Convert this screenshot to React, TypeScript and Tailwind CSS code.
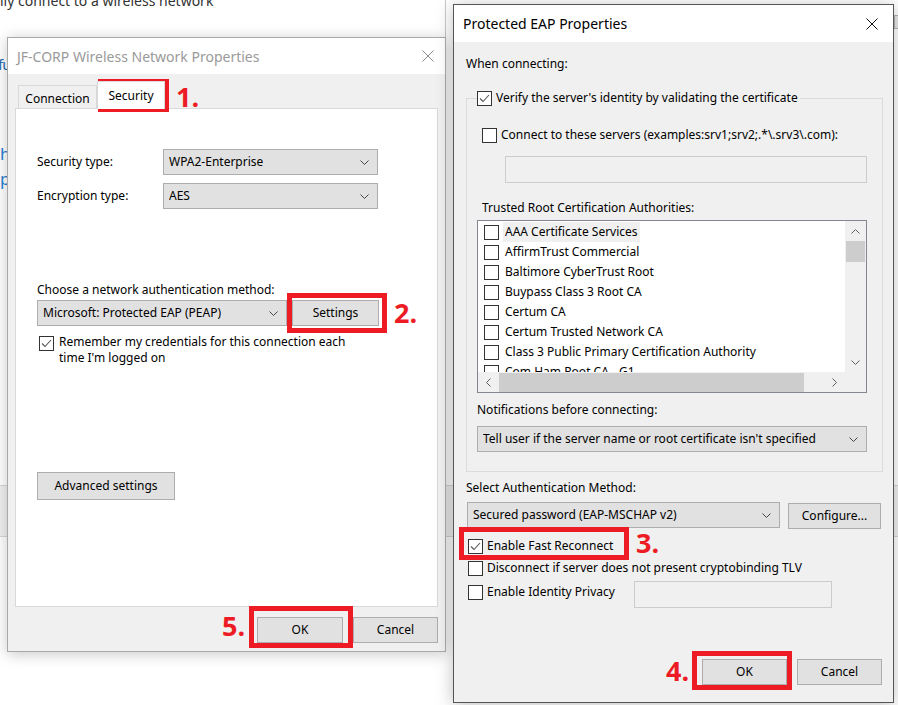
import type { ReactNode } from 'react'

function Chevron({ dir = 'down', color = '#444' }: { dir?: 'down' | 'up' | 'left' | 'right'; color?: string }) {
  const pts = {
    down: '0.5,0.5 4.5,4.5 8.5,0.5',
    up: '0.5,4.5 4.5,0.5 8.5,4.5',
    left: '4.5,0.5 0.5,4.5 4.5,8.5',
    right: '0.5,0.5 4.5,4.5 0.5,8.5',
  }[dir]
  const vertical = dir === 'down' || dir === 'up'
  return (
    <svg width={vertical ? 9 : 5} height={vertical ? 5 : 9} viewBox={vertical ? '0 0 9 5' : '0 0 5 9'} className="shrink-0">
      <polyline points={pts} fill="none" stroke={color} strokeWidth="1" />
    </svg>
  )
}

function CloseX({ color }: { color: string }) {
  return (
    <svg width="12" height="12" viewBox="0 0 12 12">
      <path d="M0.5 0.5 L11.5 11.5 M11.5 0.5 L0.5 11.5" stroke={color} strokeWidth="1" />
    </svg>
  )
}

function Check({ on = false }: { on?: boolean }) {
  return (
    <span className="flex h-[15px] w-[15px] shrink-0 items-center justify-center border border-[#333] bg-white">
      {on && (
        <svg width="11" height="9" viewBox="0 0 11 9">
          <path d="M1 4.5 L4 7.5 L10 1" fill="none" stroke="#555" strokeWidth="1.1" />
        </svg>
      )}
    </span>
  )
}

function Select({ value, className = '' }: { value: string; className?: string }) {
  return (
    <div className={`flex h-[26px] items-center justify-between border border-[#adadad] bg-[#e1e1e1] pl-[5px] pr-[8px] ${className}`}>
      <span className="truncate">{value}</span>
      <Chevron />
    </div>
  )
}

function Btn({ children, className = '' }: { children: ReactNode; className?: string }) {
  return (
    <button type="button" className={`flex h-[26px] items-center justify-center border border-[#adadad] bg-[#e1e1e1] ${className}`}>
      {children}
    </button>
  )
}

function RedBox({ className }: { className: string }) {
  return <div className={`pointer-events-none absolute border-[5px] border-[#ed1c24] ${className}`} />
}

function Step({ n, className }: { n: string; className: string }) {
  return (
    <span className={`absolute font-['Open_Sans',sans-serif] text-[27px] leading-none font-bold text-[#ed1c24] ${className}`}>
      {n}
    </span>
  )
}

const certs = [
  'AAA Certificate Services',
  'AffirmTrust Commercial',
  'Baltimore CyberTrust Root',
  'Buypass Class 3 Root CA',
  'Certum CA',
  'Certum Trusted Network CA',
  'Class 3 Public Primary Certification Authority',
  'Com Ham Root CA - G1',
]

function NetworkProperties() {
  return (
    <div className="absolute left-[7px] top-[37px] flex h-[615px] w-[439px] flex-col border border-[#a9a9a9] bg-[#f0f0f0] shadow-[0_2px_14px_rgba(0,0,0,0.22)]">
      <div className="flex h-[36px] items-center justify-between bg-white pr-[11px] pl-[9px]">
        <span className="text-[14px] text-[#9a9a9a]">JF-CORP Wireless Network Properties</span>
        <CloseX color="#8a8a8a" />
      </div>

      <div className="flex flex-1 flex-col px-[7px]">
        <div className="flex h-[34px] items-end pl-[3px]">
          <div className="flex h-[23px] w-[79px] items-center justify-center border border-b-0 border-[#d9d9d9] bg-[#f0f0f0] pt-[3px]">
            Connection
          </div>
          <div className="relative z-10 -mb-px flex h-[28px] w-[68px] items-start justify-center border border-b-0 border-[#d9d9d9] bg-white pt-[5px]">
            Security
          </div>
        </div>

        <div className="flex h-[499px] flex-col border border-[#d9d9d9] bg-white pl-[21px]">
          <div className="mt-[40px] flex items-center">
            <span className="w-[126px]">Security type:</span>
            <Select value="WPA2-Enterprise" className="w-[215px]" />
          </div>
          <div className="mt-[8px] flex items-center">
            <span className="w-[126px]">Encryption type:</span>
            <Select value="AES" className="w-[215px]" />
          </div>

          <div className="mt-[73px] leading-[16px]">Choose a network authentication method:</div>
          <div className="mt-[2px] flex items-center gap-[5px]">
            <Select value="Microsoft: Protected EAP (PEAP)" className="w-[250px]" />
            <Btn className="w-[87px]">Settings</Btn>
          </div>
          <div className="mt-[8px] flex gap-[5px] pl-[2px] leading-[16px]">
            <span className="mt-[2px]">
              <Check on />
            </span>
            <span>
              Remember my credentials for this connection each
              <br />
              time I'm logged on
            </span>
          </div>

          <Btn className="mt-[106px] h-[28px] w-[138px]">Advanced settings</Btn>
        </div>

        <div className="mt-[10px] flex justify-end gap-[10px]">
          <Btn className="w-[86px]">OK</Btn>
          <Btn className="w-[85px]">Cancel</Btn>
        </div>
      </div>
    </div>
  )
}

function EapProperties() {
  return (
    <div className="absolute left-[453px] top-[4px] flex h-[699px] w-[441px] flex-col border border-[#555] bg-[#f0f0f0] shadow-[0_2px_16px_rgba(0,0,0,0.25)]">
      <div className="flex h-[37px] items-center justify-between bg-white pr-[15px] pl-[9px]">
        <span className="text-[14px] text-black">Protected EAP Properties</span>
        <CloseX color="#111" />
      </div>

      <div className="flex flex-1 flex-col pr-[10px] pl-[12px]">
        <div className="mt-[14px] leading-[16px]">When connecting:</div>

        <div className="relative mt-[26px] flex h-[374px] flex-col border border-[#dcdcdc] pl-[15px]">
          <div className="absolute -top-[9px] left-[10px] flex items-center gap-[4px] bg-[#f0f0f0] pr-[2px] leading-[16px]">
            <Check on />
            <span>Verify the server's identity by validating the certificate</span>
          </div>

          <div className="mt-[28px] flex items-center gap-[4px] leading-[16px]">
            <Check />
            <span>Connect to these servers (examples:srv1;srv2;.*\.srv3\.com):</span>
          </div>
          <div className="mt-[13px] ml-[23px] h-[27px] w-[362px] border border-[#cccccc] bg-[#f0f0f0]" />

          <div className="mt-[17px] leading-[16px]">Trusted Root Certification Authorities:</div>

          <div className="mt-[4px] -ml-[5px] flex h-[173px] w-[390px] flex-col border border-[#828790] bg-white">
            <div className="flex min-h-0 flex-1">
              <div className="flex-1 overflow-hidden pt-px pl-[6px]">
                {certs.map((c, i) => (
                  <div key={c} className="flex h-[20px] items-center gap-[4px] leading-[20px]">
                    <Check />
                    <span className={`px-[2px] whitespace-nowrap ${i === 0 ? 'bg-[#f0f0f0]' : ''}`}>{c}</span>
                  </div>
                ))}
              </div>
              <div className="flex w-[21px] flex-col items-center bg-[#f0f0f0]">
                <div className="flex h-[20px] items-center">
                  <Chevron dir="up" color="#606060" />
                </div>
                <div className="h-[21px] w-[19px] bg-[#cdcdcd]" />
                <div className="flex-1" />
                <div className="flex h-[20px] items-center">
                  <Chevron dir="down" color="#606060" />
                </div>
              </div>
            </div>
            <div className="flex h-[20px]">
              <div className="flex flex-1 items-center bg-[#f0f0f0]">
                <div className="flex w-[21px] justify-center">
                  <Chevron dir="left" color="#606060" />
                </div>
                <div className="h-[19px] w-[305px] bg-[#cdcdcd]" />
                <div className="flex-1" />
                <div className="flex w-[21px] justify-center">
                  <Chevron dir="right" color="#606060" />
                </div>
              </div>
              <div className="w-[21px] bg-[#f0f0f0]" />
            </div>
          </div>

          <div className="mt-[9px] -ml-[5px] leading-[16px]">Notifications before connecting:</div>
          <Select value="Tell user if the server name or root certificate isn't specified" className="mt-[8px] -ml-[5px] w-[390px]" />
        </div>

        <div className="mt-[8px] leading-[16px]">Select Authentication Method:</div>
        <div className="mt-[6px] flex items-start pl-[1px]">
          <Select value="Secured password (EAP-MSCHAP v2)" className="w-[313px]" />
          <Btn className="mt-px ml-[8px] w-[93px]">Configure...</Btn>
        </div>

        <div className="mt-[9px] flex items-center gap-[4px] pl-[2px] leading-[16px]">
          <Check on />
          <span>Enable Fast Reconnect</span>
        </div>
        <div className="mt-[6px] flex items-center gap-[4px] pl-[2px] leading-[16px]">
          <Check />
          <span>Disconnect if server does not present cryptobinding TLV</span>
        </div>
        <div className="mt-[5px] flex items-start pl-[2px]">
          <div className="mt-[3px] flex w-[166px] items-center gap-[4px] leading-[16px]">
            <Check />
            <span>Enable Identity Privacy</span>
          </div>
          <div className="h-[27px] w-[198px] border border-[#cccccc] bg-[#f0f0f0]" />
        </div>

        <div className="mt-auto mb-[17px] flex justify-end gap-[10px] pr-px">
          <Btn className="w-[85px] border-[#0078d7]">OK</Btn>
          <Btn className="w-[85px]">Cancel</Btn>
        </div>
      </div>
    </div>
  )
}

export default function App() {
  return (
    <div className="relative h-[705px] w-[898px] overflow-hidden bg-white font-['Noto_Sans',sans-serif] text-[12px] text-black">
      <div className="absolute top-[-9px] left-0 text-[14px] leading-[20px] whitespace-nowrap text-[#333]">lly connect to a wireless network</div>
      <div className="absolute top-[53px] -left-[2px] text-[15px] tracking-[-1px] text-[#2b6cb0]">fu</div>
      <div className="absolute top-[141px] left-0 text-[17px] text-[#2b7fd4]">h</div>
      <div className="absolute top-[166px] left-0 text-[17px] text-[#2b7fd4]">p</div>
      <div className="absolute top-0 left-[445px] h-[37px] w-px bg-[#c8c8c8]" />
      <div className="absolute top-[485px] right-0 left-0 h-[52px] border-y border-[#d6d6d6] bg-[#f0f0f0]" />
      <div className="absolute top-[15px] left-[894px] h-[14px] w-[6px] border border-[#b5b5b5] bg-[#e8e8e8]" />

      <NetworkProperties />
      <EapProperties />

      <RedBox className="top-[79px] left-[98px] h-[33px] w-[71px]" />
      <Step n="1." className="top-[83px] left-[176px]" />
      <RedBox className="top-[293px] left-[287px] h-[40px] w-[100px]" />
      <Step n="2." className="top-[299px] left-[394px]" />
      <RedBox className="top-[527px] left-[459px] h-[33px] w-[170px]" />
      <Step n="3." className="top-[529px] left-[636px]" />
      <RedBox className="top-[651px] left-[692px] h-[39px] w-[100px]" />
      <Step n="4." className="top-[657px] left-[666px]" />
      <RedBox className="top-[606px] left-[249px] h-[42px] w-[104px]" />
      <Step n="5." className="top-[612px] left-[222px]" />
    </div>
  )
}
